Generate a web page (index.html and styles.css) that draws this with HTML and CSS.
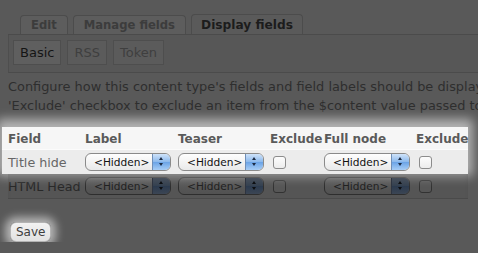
FILE: index.html
```html
<!DOCTYPE html>
<html lang="en">
<head>
    <meta charset="UTF-8">
    <meta name="viewport" content="width=device-width, initial-scale=1.0">
    <title>Display fields</title>
    <link rel="stylesheet" href="styles.css">
</head>
<body>
    <div class="page">
        <div class="tabs">
            <span class="tab">Edit</span>
            <span class="tab">Manage fields</span>
            <span class="tab active">Display fields</span>
        </div>
        <div class="subbar">
            <span class="subtab active">Basic</span>
            <span class="subtab">RSS</span>
            <span class="subtab">Token</span>
        </div>
        <p class="help">
            <span>Configure how this content type's fields and field labels should be displayed in teaser and full node views. Use the</span>
            <span>'Exclude' checkbox to exclude an item from the $content value passed to the node template.</span>
        </p>

        <div class="fields">
            <div class="spot">
                <div class="row head">
                    <span>Field</span>
                    <span>Label</span>
                    <span>Teaser</span>
                    <span>Exclude</span>
                    <span>Full node</span>
                    <span>Exclude</span>
                </div>
                <div class="row odd">
                    <span class="name">Title hide</span>
                    <span class="select"><span class="value">&lt;Hidden&gt;</span><span class="arrows"></span></span>
                    <span class="select"><span class="value">&lt;Hidden&gt;</span><span class="arrows"></span></span>
                    <span class="check"></span>
                    <span class="select"><span class="value">&lt;Hidden&gt;</span><span class="arrows"></span></span>
                    <span class="check"></span>
                </div>
            </div>
            <div class="row even">
                <span class="name">HTML Head</span>
                <span class="select"><span class="value">&lt;Hidden&gt;</span><span class="arrows"></span></span>
                <span class="select"><span class="value">&lt;Hidden&gt;</span><span class="arrows"></span></span>
                <span class="check"></span>
                <span class="select"><span class="value">&lt;Hidden&gt;</span><span class="arrows"></span></span>
                <span class="check"></span>
            </div>
        </div>

        <div class="actions">
            <span class="save">Save</span>
        </div>
    </div>
</body>
</html>
```

FILE: styles.css
```css
body {
  margin: 0;
  background-color: #595959;
  font-family: "DejaVu Sans", Verdana, sans-serif;
  overflow: hidden;
}

.page {
  padding-top: 14px;
  width: 478px;
  overflow: hidden;
}

/* primary tabs */
.tabs {
  display: flex;
  align-items: flex-end;
  gap: 5px;
  margin-left: 8px;
  padding-left: 12px;
  height: 20px;
  border-bottom: 1px solid #4b4b4b;
}

.tab {
  height: 18px;
  padding: 0 10px;
  line-height: 19px;
  font-weight: bold;
  font-size: 11.6px;
  color: #3c3c3c;
  background-color: #5d5d5d;
  border: 1px solid #4c4c4c;
  border-bottom: none;
  border-radius: 4px 4px 0 0;
}

.tab.active {
  height: 19px;
  line-height: 20px;
  padding: 0 9px;
  font-size: 12.2px;
  color: #1c1c1c;
  background-color: #5a5a5a;
}

/* secondary tabs */
.subbar {
  display: flex;
  gap: 6px;
  margin-left: 8px;
  height: 38px;
  padding: 5px 0 0 4px;
  box-sizing: border-box;
  border-left: 1px solid #4e4e4e;
  border-bottom: 1px solid #4b4b4b;
  background-color: #575757;
}

.subtab {
  height: 23px;
  padding: 0 6px;
  line-height: 23px;
  font-size: 13px;
  color: #3f3f3f;
  border: 1px solid #4e4e4e;
  background-color: #5b5b5b;
}

.subtab.active {
  color: #151515;
  background-color: #5f5f5f;
}

.help {
  margin: 4px 0 0 8px;
  font-size: 12.9px;
  line-height: 19px;
  color: #2e2e2e;
  white-space: nowrap;
}

.help span {
  display: block;
}

/* fields table */
.fields {
  margin-top: 12px;
  margin-left: 8px;
  width: 460px;
}

.spot {
  margin-left: -6px;
  padding-left: 6px;
  background-color: #f6f6f6;
  box-shadow: 0 -3px 10px 5px rgba(255, 255, 255, 0.55);
  position: relative;
}

.row {
  display: grid;
  grid-template-columns: 77px 93px 92px 54px 92px 1fr;
  align-items: center;
}

.head {
  height: 22px;
  align-items: end;
  padding-bottom: 3px;
  box-sizing: border-box;
  font-weight: bold;
  font-size: 12px;
  color: #5a5a5a;
}

.odd {
  height: 25px;
  background-color: #ececec;
  border-top: 1px solid #fbfbfb;
  box-sizing: border-box;
  margin-left: -6px;
  padding-left: 6px;
}

.even {
  height: 24px;
  background-color: #555;
  border-bottom: 1px solid #4a4a4a;
  box-shadow: inset 0 6px 6px -4px rgba(0, 0, 0, 0.25);
}

.name {
  font-size: 12.7px;
  color: #666;
}

.even .name {
  color: #282828;
}

.select {
  display: flex;
  width: 86px;
  height: 18px;
  box-sizing: border-box;
  border: 1px solid #8a8a8a;
  border-radius: 6px;
  overflow: hidden;
  background: linear-gradient(#fefefe, #e9e9e9);
  font-size: 10.6px;
  color: #111;
}

.value {
  flex: 1;
  line-height: 16px;
  padding-left: 8px;
}

.arrows {
  width: 17px;
  position: relative;
  border-left: 1px solid #6f8fb8;
  background: linear-gradient(#cfe3fa, #8ab8ec 50%, #6aa3e6 51%, #a7cdf6);
}

.arrows::before,
.arrows::after {
  content: "";
  position: absolute;
  left: 6px;
  border-left: 2.5px solid transparent;
  border-right: 2.5px solid transparent;
}

.arrows::before {
  top: 3px;
  border-bottom: 3.5px solid #1b2b44;
}

.arrows::after {
  top: 9px;
  border-top: 3.5px solid #1b2b44;
}

.check {
  width: 11px;
  height: 11px;
  margin-left: 3px;
  border: 1px solid #8c8c8c;
  border-radius: 3px;
  background: linear-gradient(#fdfdfd, #ececec);
}

.even .select {
  border-color: #2e2e2e;
  background: linear-gradient(#5b5b5b, #525252);
  color: #1e1e1e;
}

.even .arrows {
  border-left-color: #2e3440;
  background: linear-gradient(#48505c, #34404f 50%, #2b3a4e 51%, #3c4654);
}

.even .arrows::before {
  border-bottom-color: #0d0f12;
}

.even .arrows::after {
  border-top-color: #0d0f12;
}

.even .check {
  border-color: #323232;
  background: #565656;
}

.actions {
  margin: 22px 0 0 10px;
}

.save {
  display: inline-block;
  height: 18px;
  padding: 0 5px;
  line-height: 18px;
  font-size: 12px;
  color: #3e3e3e;
  background: linear-gradient(#f2f2f2, #e2e2e2);
  border: 1px solid #b3b3b3;
  border-radius: 6px;
  box-shadow: 0 0 8px 5px rgba(255, 255, 255, 0.55);
}
```
